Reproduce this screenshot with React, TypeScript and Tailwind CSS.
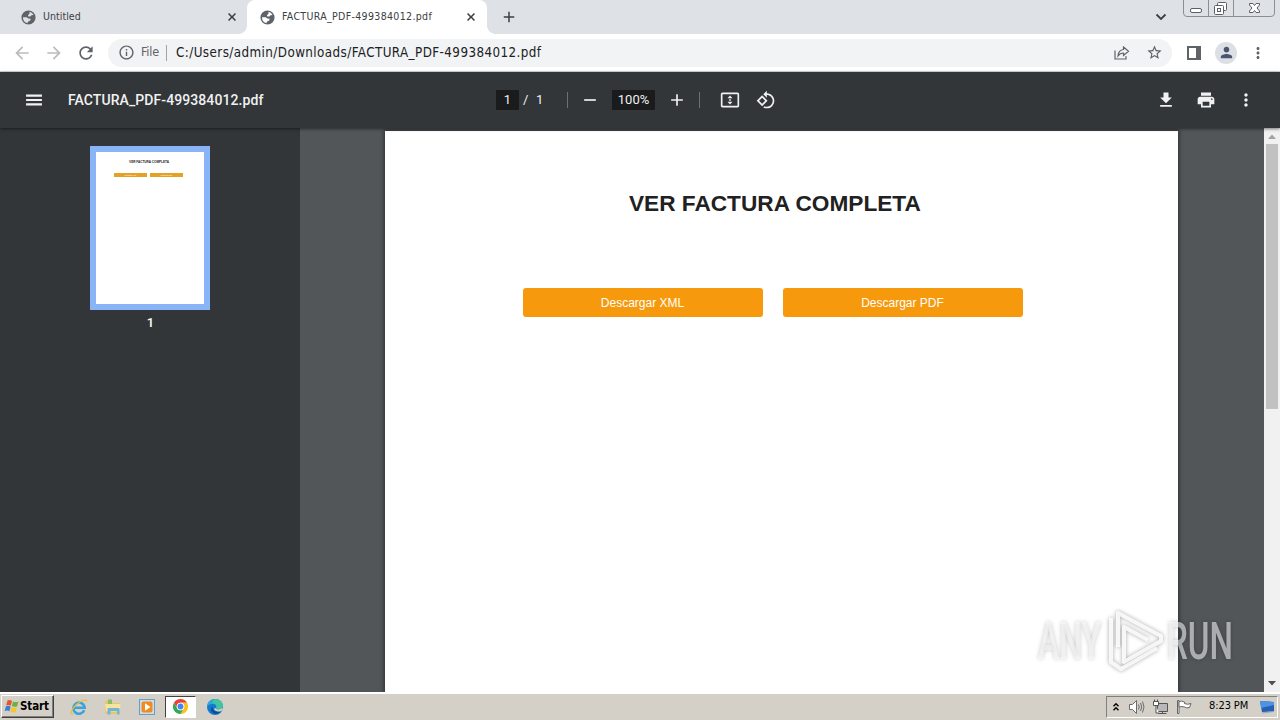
import React from 'react';

const PATHS = {
  globe:
    'M12 2a10 10 0 1 0 0 20 10 10 0 0 0 0-20zM13.500 4.300c2.400.4 4.600 2 5.700 4.200l-3 .3-1.700 1.700h-2.700l-.6-1.800 2-1.500zM4.200 11.500l5.300.3 2.200 1.700 3.300.3-.4 2.400-2.600 1-1.500 2.600C6.700 19.200 4 16 4.200 11.500z',
  back: 'M20 11H7.830l5.590-5.590L12 4l-8 8 8 8 1.410-1.410L7.830 13H20v-2z',
  forward: 'M4 13h12.170l-5.590 5.590L12 20l8-8-8-8-1.410 1.410L16.170 11H4v2z',
  refresh:
    'M17.65 6.35C16.2 4.9 14.21 4 12 4c-4.42 0-7.99 3.58-7.99 8s3.57 8 7.99 8c3.73 0 6.84-2.55 7.73-6h-2.08c-.82 2.33-3.04 4-5.65 4-3.31 0-6-2.69-6-6s2.69-6 6-6c1.66 0 3.14.69 4.22 1.78L13 11h7V4l-2.35 2.35z',
  info: 'M11 7h2v2h-2zm0 4h2v6h-2zm1-9C6.48 2 2 6.48 2 12s4.48 10 10 10 10-4.48 10-10S17.52 2 12 2zm0 18c-4.41 0-8-3.59-8-8s3.59-8 8-8 8 3.59 8 8-3.59 8-8 8z',
  star: 'M22 9.24l-7.19-.62L12 2 9.19 8.63 2 9.24l5.46 4.73L5.82 21 12 17.27 18.18 21l-1.63-7.03L22 9.24zM12 15.4l-3.76 2.27 1-4.28-3.32-2.88 4.38-.38L12 6.1l1.71 4.04 4.38.38-3.32 2.88 1 4.28L12 15.4z',
  person:
    'M12 12c2.21 0 4-1.79 4-4s-1.79-4-4-4-4 1.79-4 4 1.79 4 4 4zm0 2c-2.67 0-8 1.34-8 4v2h16v-2c0-2.66-5.33-4-8-4z',
  more: 'M12 8c1.1 0 2-.9 2-2s-.9-2-2-2-2 .9-2 2 .9 2 2 2zm0 2c-1.1 0-2 .9-2 2s.9 2 2 2 2-.9 2-2-.9-2-2-2zm0 6c-1.1 0-2 .9-2 2s.9 2 2 2 2-.9 2-2-.9-2-2-2z',
  menu: 'M2.500 18.500h19V16h-19v2.500zm0-5.250h19v-2.500h-19v2.500zm0-7.750V8h19V5.500h-19z',
  minus: 'M19 13H5v-2h14v2z',
  plus: 'M19 13h-6v6h-2v-6H5v-2h6V5h2v6h6v2z',
  close: 'M20 6.200L17.800 4 12 9.800 6.200 4 4 6.200 9.800 12 4 17.800 6.200 20 12 14.200 17.800 20 20 17.800 14.200 12z',
  download: 'M19 9h-4V3H9v6H5l7 7 7-7zM5 18v2h14v-2H5z',
  print:
    'M19 8H5c-1.66 0-3 1.34-3 3v6h4v4h12v-4h4v-6c0-1.66-1.34-3-3-3zm-3 11H8v-5h8v5zm3-7c-.55 0-1-.45-1-1s.45-1 1-1 1 .45 1 1-.45 1-1 1zm-1-9H6v4h12V3z',
  rotate:
    'M7.34 6.41L.86 12.9l6.49 6.48 6.49-6.48-6.5-6.49zM3.69 12.9l3.66-3.66L11 12.9l-3.66 3.66-3.65-3.66zm15.67-6.26C17.61 4.88 15.3 4 13 4V.76L8.76 5 13 9.24V6c1.79 0 3.58.68 4.95 2.05 2.73 2.73 2.73 7.17 0 9.9C16.58 19.32 14.79 20 13 20c-.97 0-1.94-.21-2.84-.61l-1.49 1.49C10.02 21.62 11.51 22 13 22c2.3 0 4.61-.88 6.36-2.64 3.52-3.51 3.52-9.21 0-12.72z',
  fitPage:
    'M3 3h18c1.1 0 2 .9 2 2v14c0 1.1-.9 2-2 2H3c-1.1 0-2-.9-2-2V5c0-1.1.9-2 2-2zm0 2v14h18V5H3zm9 1.500L15 10H9l3-3.500zM9 14h6l-3 3.500L9 14zm2-2.800h2v1.600h-2z',
};

interface IconProps {
  name: keyof typeof PATHS;
  size: number;
  className?: string;
}

function Icon({ name, size, className = '' }: IconProps) {
  return (
    <svg
      width={size}
      height={size}
      viewBox="0 0 24 24"
      fill="currentColor"
      fillRule="evenodd"
      className={`shrink-0 ${className}`}
    >
      <path d={PATHS[name]} />
    </svg>
  );
}

function TabStrip() {
  return (
    <div className="flex h-[34px] bg-[#dee1e6] font-['DejaVu_Sans_Condensed','DejaVu_Sans',sans-serif] text-[10.5px] text-[#3c4043]">
      <div className="flex w-[247px] items-center pl-5">
        <Icon name="globe" size={17} className="text-[#5f6368]" />
        <span className="ml-1.5 w-[183px] tracking-[0.05px]">Untitled</span>
        <Icon name="close" size={12} />
      </div>
      <div className="relative flex w-[240px] items-center rounded-t-lg bg-white pl-3">
        <div className="absolute bottom-0 -left-2 h-2 w-2 bg-[radial-gradient(circle_at_0_0,#dee1e6_7.5px,#fff_8px)]" />
        <div className="absolute -right-2 bottom-0 h-2 w-2 bg-[radial-gradient(circle_at_100%_0,#dee1e6_7.5px,#fff_8px)]" />
        <Icon name="globe" size={17} className="text-[#5f6368]" />
        <span className="ml-1.5 w-[183px] tracking-[0.34px]">FACTURA_PDF-499384012.pdf</span>
        <Icon name="close" size={12} />
      </div>
      <div className="flex flex-1 items-center pl-[13px]">
        <Icon name="plus" size={18} />
      </div>
      <svg width="12" height="8" viewBox="0 0 12 8" fill="none" stroke="#3c4043" strokeWidth="1.800" className="mt-[13px] mr-[16px]">
        <path d="M1.500 1.500L6 6l4.500-4.500" />
      </svg>
      <WindowButtons />
    </div>
  );
}

function WindowButtons() {
  return (
    <svg width="97" height="18" viewBox="0 0 97 18" fill="none" className="shrink-0">
      <path d="M.5 0v13q0 3.500 3.500 3.500h84q3.500 0 3.500-3.500V0M25.500 0v16M50.500 0v16" stroke="#8a8f96" />
      <rect x="7.500" y="8.500" width="11" height="4" rx="1.500" fill="#fff" stroke="#5a5f68" />
      <rect x="34.500" y="2.500" width="9" height="8" rx="1" fill="#fff" stroke="#5a5f68" />
      <rect x="31.500" y="5.500" width="9" height="9" rx="1" fill="#fff" stroke="#5a5f68" />
      <rect x="34.500" y="8.500" width="3" height="3" stroke="#5a5f68" />
      <path
        d="M66.500 3.500h3.500l1.500 2 1.500-2h3.500v1.500L74 8l2.500 3v1.500H73l-1.500-2-1.500 2h-3.500V11L69 8l-2.500-3z"
        fill="#fff"
        stroke="#5a5f68"
      />
    </svg>
  );
}

function AddressBar() {
  return (
    <div className="flex h-[38px] items-center border-b border-[#d5d8dc] bg-white pr-[9px] pl-3 font-['DejaVu_Sans_Condensed','DejaVu_Sans',sans-serif] text-[#5f6368]">
      <Icon name="back" size={20} className="text-[#babcbe]" />
      <Icon name="forward" size={20} className="ml-3 text-[#babcbe]" />
      <Icon name="refresh" size={20} className="ml-3" />
      <div className="ml-3 flex h-7 w-[1064px] shrink-0 items-center rounded-full bg-[#f1f3f4] pr-[9px] pl-2.5">
        <Icon name="info" size={17} />
        <span className="ml-1.5 w-[25px] text-[12.5px] tracking-[-0.2px]">File</span>
        <span className="h-4 w-px bg-[#a0a3a7]" />
        <span className="ml-[9px] flex-1 text-[13.3px] tracking-[0.42px] whitespace-nowrap text-[#202124]">
          C:/Users/admin/Downloads/FACTURA_PDF-499384012.pdf
        </span>
        <svg width="16" height="14" viewBox="0 0 16 14" fill="none" stroke="#5f6368" strokeWidth="1.200">
          <path d="M1 4.500v8.500h11v-3" />
          <path d="M9.500 1l5 4.200-5 4.200V7Q6 7 4 9.800 4.500 4 9.500 3.500z" />
        </svg>
        <Icon name="star" size={17} className="ml-4" />
      </div>
      <svg width="14" height="14" viewBox="0 0 14 14" className="ml-[15px] shrink-0">
        <path d="M0 0h14v14H0zM2 2v10h7V2z" fill="#5f6368" fillRule="evenodd" />
      </svg>
      <div className="ml-3.5 flex h-[22px] w-[22px] shrink-0 items-center justify-center rounded-full bg-[#dcdfe4]">
        <Icon name="person" size={17} className="text-[#4a5570]" />
      </div>
      <Icon name="more" size={18} className="ml-3" />
    </div>
  );
}

function PdfToolbar() {
  return (
    <div className="relative z-10 flex h-14 items-center bg-[#323639] pl-6 font-['Roboto',sans-serif] text-[#f1f1f1] shadow-[0_1px_3px_rgba(0,0,0,0.5)]">
      <Icon name="menu" size={20} />
      <span className="ml-6 w-[428px] text-[14px] font-medium tracking-[0.08px]">FACTURA_PDF-499384012.pdf</span>
      <span className="flex h-5 w-[23px] items-center justify-center bg-[#191b1c] text-[13px]">1</span>
      <span className="ml-1 w-[13px] text-[13px]">/</span>
      <span className="w-[31px] text-[13px]">1</span>
      <span className="h-4 w-px bg-[#6d7072]" />
      <Icon name="minus" size={20} className="ml-3" />
      <span className="ml-3 flex h-5 w-[43px] items-center justify-center bg-[#191b1c] text-[13px]">100%</span>
      <Icon name="plus" size={20} className="ml-3" />
      <span className="ml-3 h-4 w-px bg-[#6d7072]" />
      <Icon name="fitPage" size={20} className="ml-5" />
      <Icon name="rotate" size={20} className="ml-4" />
      <div className="flex flex-1 justify-end gap-5 pr-6">
        <Icon name="download" size={20} />
        <Icon name="print" size={20} />
        <Icon name="more" size={20} />
      </div>
    </div>
  );
}

function Thumbnails() {
  return (
    <div className="flex w-[300px] flex-col items-center bg-[#323639] pt-[18px]">
      <div className="h-[164px] w-[120px] border-6 border-[#8ab4f8] bg-white pt-2 font-['Liberation_Sans',Arial,sans-serif]">
        <div className="pr-0.5 text-center text-[3.1px] leading-[5px] font-bold text-[#222]">VER FACTURA COMPLETA</div>
        <div className="mt-2 ml-[18px] flex gap-[3px] text-[1.7px] leading-[4px] text-white">
          <div className="h-1 w-[33px] bg-[#e5a123] text-center">Descargar XML</div>
          <div className="h-1 w-[33px] bg-[#e5a123] text-center">Descargar PDF</div>
        </div>
      </div>
      <span className="mt-[5px] pl-px font-['Roboto',sans-serif] text-[13px] leading-4 font-medium text-white">1</span>
    </div>
  );
}

function Page() {
  return (
    <div className="mt-[3px] ml-[85px] w-[793px] bg-white font-['Liberation_Sans',Arial,sans-serif] shadow-[0_0_4px_1px_rgba(0,0,0,0.45)]">
      <h1 className="mt-[58px] ml-[244px] text-[22.65px] leading-[28px] font-bold whitespace-nowrap text-[#212121]">
        VER FACTURA COMPLETA
      </h1>
      <div className="mt-[71px] ml-[137.5px] flex gap-5 text-[12px] text-white">
        <button className="h-[29px] w-[240px] rounded-[3px] bg-[#f6990d]">Descargar XML</button>
        <button className="h-[29px] w-[240px] rounded-[3px] bg-[#f6990d]">Descargar PDF</button>
      </div>
    </div>
  );
}

function Scrollbar() {
  return (
    <div className="flex w-4 flex-col items-center bg-[#f1f1f1]">
      <svg width="16" height="16" viewBox="0 0 16 16">
        <path d="M4 11l4-4.500 4 4.500z" fill="#a3a3a3" />
      </svg>
      <div className="h-[265px] w-3 bg-[#c1c1c1]" />
      <svg width="16" height="16" viewBox="0 0 16 16" className="mt-auto">
        <path d="M4 5h8l-4 4.500z" fill="#505050" />
      </svg>
    </div>
  );
}

// Translucent logo laid over the bottom right corner
function Watermark() {
  return (
    <svg
      width="230"
      height="84"
      viewBox="0 0 230 84"
      className="absolute top-[602px] left-[1030px] z-20 overflow-visible drop-shadow-[0_0_2px_rgba(0,0,0,0.4)]"
    >
      <g fill="#fff" fillOpacity="0.55" fontFamily="Roboto, sans-serif" fontSize="52" fontWeight="500">
        <text x="8" y="57" textLength="63" lengthAdjust="spacingAndGlyphs">
          ANY
        </text>
        <text x="137" y="57" textLength="66" lengthAdjust="spacingAndGlyphs">
          RUN
        </text>
      </g>
      <g fill="none" stroke="#fff" strokeOpacity="0.85" strokeWidth="4" strokeLinejoin="round">
        <path d="M88 45V11l43 23v5L94 60V25l24 13" />
        <path d="M81 16v44l10 7 36-21" />
      </g>
    </svg>
  );
}

function StartButton() {
  return (
    <div className="ml-px flex h-[23px] w-[53px] items-center border border-t-white border-r-[#404040] border-b-[#404040] border-l-white bg-[#d4d0c8] pl-0.5 shadow-[inset_-1px_-1px_0_#808080]">
      <svg width="16" height="15" viewBox="0 0 16 15" className="shrink-0">
        <path d="M3.500 1.500Q6 .3 8 2L6.800 6.700Q5 5.300 2.200 6.300z" fill="#e8552a" />
        <path d="M9 2.400q2.500 1.300 5.500 0L13.200 7.200q-3 1.200-5.400-.1z" fill="#6cb33e" />
        <path d="M2 7.300q2.500-1.200 4.600.4L5.400 12.200Q3.300 11 .6 12z" fill="#3b7dd8" />
        <path d="M7.500 8.200q2.500 1.300 5.500 0L11.700 13q-3 1.200-5.300-.2z" fill="#f7c52b" />
      </svg>
      <span className="text-[11.5px] font-bold tracking-[-0.1px] text-black">Start</span>
    </div>
  );
}

function QuickLaunch() {
  return (
    <div className="flex items-center">
      {/* Internet Explorer */}
      <svg width="18" height="18" viewBox="0 0 18 18" fill="none" className="ml-4">
        <path d="M14.200 12.300A5.600 5.600 0 1 1 14.600 9.800H4.500" stroke="#38a3de" strokeWidth="2.600" />
        <path d="M3 15.500C-.5 18 1 11.500 6 7s11-7 10.500-3.500" stroke="#e9bd3c" strokeWidth="1.300" />
      </svg>
      {/* Explorer */}
      <svg width="18" height="18" viewBox="0 0 18 18" className="ml-4">
        <path d="M1 3h6l1 2h8v11H1z" fill="#e9c765" />
        <path d="M4 1.500h4v5H4z" fill="#8bbf63" />
        <path d="M1 6h15.500l-1 7.500H2z" fill="#f6e3a0" />
        <path d="M3.500 16.500V11q0-1 1-1h10q1 0 1 1v5.500H13V13H6.500v3.500z" fill="#6fb5dc" />
      </svg>
      {/* Media Player */}
      <svg width="18" height="18" viewBox="0 0 18 18" className="ml-4">
        <rect x="1.500" y="1.500" width="15" height="15" fill="#c7def0" stroke="#6a9cc8" />
        <rect x="3.500" y="3.500" width="11" height="11" rx="2" fill="#f28a1c" />
        <path d="M7 5.300L12.500 9 7 12.700z" fill="#fff" />
      </svg>
      {/* Chrome, pressed */}
      <div className="ml-[9px] flex h-[22px] w-[31px] items-center justify-center border border-t-[#404040] border-r-white border-b-white border-l-[#404040] bg-white">
        <svg width="17" height="17" viewBox="0 0 18 18">
          <circle cx="9" cy="9" r="8" fill="#fff" />
          <path d="M9 1a8 8 0 0 1 6.930 4H9a4 4 0 0 0-3.460 6L2.070 5A8 8 0 0 1 9 1z" fill="#ea4335" />
          <path d="M15.930 5A8 8 0 0 1 9 17l3.460-6A4 4 0 0 0 9 5z" fill="#fbc116" />
          <path d="M9 17A8 8 0 0 1 2.070 5l3.470 6a4 4 0 0 0 6.920 0z" fill="#34a853" />
          <circle cx="9" cy="9" r="4" fill="#fff" />
          <circle cx="9" cy="9" r="3.100" fill="#4285f4" />
        </svg>
      </div>
      {/* Edge */}
      <svg width="18" height="18" viewBox="0 0 18 18" className="ml-2.5">
        <circle cx="9" cy="9" r="8" fill="#1479cf" />
        <path d="M1 8.500C2 3.500 5.500 1 9.500 1c4.500 0 7.500 3.300 7.500 6.500 0 2.500-2 4-4.500 4-2 0-3-.8-2.300-1.800C11 8 9.500 5.800 6.500 5.800 4 5.800 2 7 1 8.500z" fill="#41c5a0" />
        <path d="M1 8.500C2 3.500 5.500 1 9.500 1 7 2 6 4 6.500 5.800 4 5.800 2 7 1 8.500z" fill="#2ba8dd" />
        <path d="M6.500 8.500c-.5 3.500 3 6.500 8.800 4.500C12 18 6 16 5 12.500c-.4-1.600.3-3.200 1.500-4z" fill="#0c4f96" />
        <path d="M10.200 9.700c-.7 1 .3 1.800 2.300 1.800 1.500 0 2.800-.5 3.600-1.400l.9 1.400-1.700 1.500c-3.300 1.200-6.500.3-7.300-2z" fill="#d4d0c8" />
      </svg>
    </div>
  );
}

function Tray() {
  return (
    <div className="mr-0.5 ml-auto flex h-[22px] w-[172px] items-center border border-t-[#808080] border-r-white border-b-white border-l-[#808080]">
      <svg width="8" height="10" viewBox="0 0 8 10" fill="none" stroke="#000" strokeWidth="1.400" className="ml-[5px] shrink-0">
        <path d="M1.500 4.200L4 1.700l2.500 2.500M1.500 8.200L4 5.700l2.500 2.500" />
      </svg>
      <svg width="17" height="16" viewBox="0 0 17 16" fill="none" stroke="#6b6b6b" className="ml-2 shrink-0">
        <path d="M1.500 5.500h3l4-4v13l-4-4h-3z" fill="#fff" />
        <path d="M10.500 5.500q1.500 2.500 0 5M12.500 4q2.500 4 0 8M14.500 2.500q3 5.500 0 11" />
      </svg>
      <svg width="17" height="16" viewBox="0 0 17 16" fill="none" stroke="#555" className="ml-[7px] shrink-0">
        <path d="M5.500 4.500h10v8h-10z" fill="#b8b8b8" />
        <path d="M6.500 14.500h8M10.500 12.500v2" />
        <path d="M1.500 2.500h5v4h-5zM2.500.5v2M5.500.5v2M4 6.500v7.500h3" fill="#fff" />
      </svg>
      <svg width="17" height="16" viewBox="0 0 17 16" fill="#fff" stroke="#666" className="ml-[7px] shrink-0">
        <path d="M1.500 1.500h1.500v13H1.500z" />
        <path d="M3 2.500q3-1 5.500.5v1.500q3 1.500 6.500 0l-1.500 4q-3 1-5-.5-2.500-1-5.500 0z" />
      </svg>
      <span className="ml-4 w-[42px] shrink-0 text-[11px] tracking-[-0.1px] whitespace-nowrap text-black">8:23 PM</span>
      <svg width="17" height="14" viewBox="0 0 17 14" className="ml-2 shrink-0">
        <path d="M1 1l14 1v9.500l-12 .5z" fill="#245fb8" />
        <path d="M1 1l14 1v3L2 8z" fill="#4f93e0" />
        <path d="M3 13l12-1.500" stroke="#9aa7b5" />
      </svg>
    </div>
  );
}

export default function App() {
  return (
    <div className="relative flex h-[720px] w-[1280px] flex-col overflow-hidden">
      <TabStrip />
      <AddressBar />
      <PdfToolbar />
      <div className="flex h-[564px]">
        <Thumbnails />
        <div className="flex flex-1 overflow-hidden bg-[#525659]">
          <Page />
        </div>
        <Scrollbar />
      </div>
      <div className="flex flex-1 items-center border-t-2 border-white bg-[#d4d0c8] pb-px font-['DejaVu_Sans_Condensed','DejaVu_Sans',sans-serif]">
        <StartButton />
        <QuickLaunch />
        <Tray />
      </div>
      <Watermark />
    </div>
  );
}
